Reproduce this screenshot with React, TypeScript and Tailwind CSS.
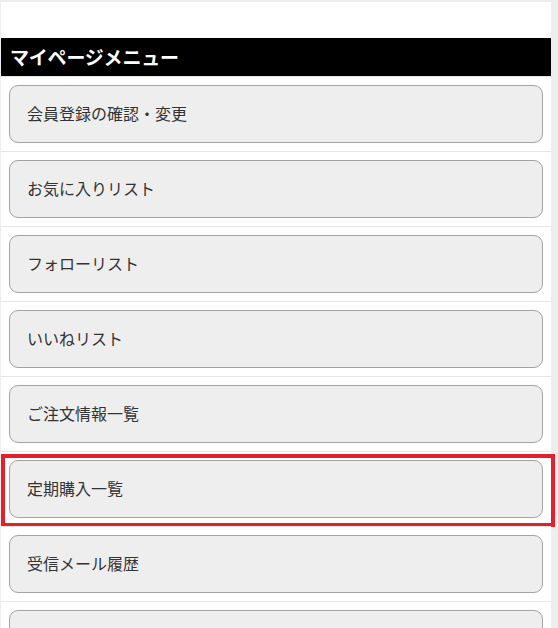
import React from "react";

const items = [
  "会員登録の確認・変更",
  "お気に入りリスト",
  "フォローリスト",
  "いいねリスト",
  "ご注文情報一覧",
  "定期購入一覧",
  "受信メール履歴",
  "",
];

export default function App() {
  return (
    <div
      className="w-[558px] h-[628px] overflow-hidden bg-[#eeeeee] pt-[2px] pl-[1px]"
      style={{ fontFamily: '"Noto Sans CJK JP", "Noto Sans", sans-serif' }}
    >
      <div className="w-[550px] bg-white min-h-[700px]">
        <div className="h-[36px]" />
        <div className="h-[38px] bg-black flex items-center pl-[9px] pb-[1px]">
          <span className="text-white font-bold text-[19px] leading-none tracking-[-0.2px]">
            マイページメニュー
          </span>
        </div>
        <ul>
          {items.map((label, i) => (
            <li
              key={i}
              className="relative border-t border-[#e6e6e6] px-[8px] py-[8px]"
            >
              <div className="h-[58px] rounded-[9px] border border-[#a3a3a3] bg-[#eeeeee] flex items-center pl-[17px] pb-[3px] text-[16px] text-[#333333]">
                {label}
              </div>
              {i === 5 && (
                <div className="absolute top-[2px] -bottom-[1px] left-0 -right-[4px] border-[4px] border-[#e4202c] pointer-events-none" />
              )}
            </li>
          ))}
        </ul>
      </div>
    </div>
  );
}
